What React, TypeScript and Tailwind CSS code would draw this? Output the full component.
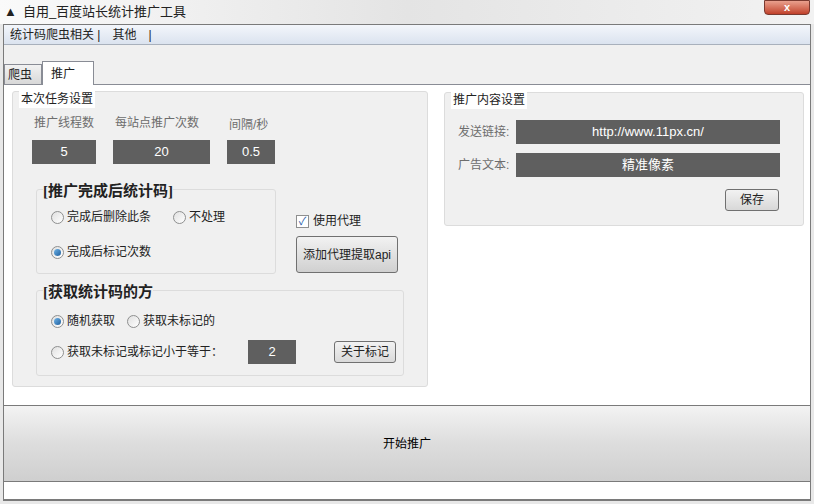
import React from "react";

const F = { fontFamily: '"Liberation Sans","Noto Sans CJK SC",sans-serif' };
const S = { fontFamily: '"Liberation Serif","Noto Sans CJK SC",serif' };

function Radio({ on }: { on?: boolean }) {
  return (
    <span className="inline-flex w-[13px] h-[13px] rounded-full border border-[#8e8f8f] bg-gradient-to-br from-[#e0e0e0] to-white items-center justify-center mr-[3px]">
      {on && <span className="w-[7px] h-[7px] rounded-full bg-gradient-to-br from-[#6fb4e8] to-[#1d5f9e]" />}
    </span>
  );
}

function Box({ v, w }: { v: string; w: string }) {
  return <div className={`${w} h-[24px] bg-[#5f5f5f] text-white flex items-center justify-center text-[13px]`}>{v}</div>;
}

export default function App() {
  return (
    <div className="w-[814px] h-[504px] bg-[#e8e8e8] text-[12px] text-[#222] overflow-hidden flex flex-col" style={F}>
      <div className="h-[24px] flex items-center bg-gradient-to-r from-[#fafafa] via-[#e4e4e4] to-[#f2f2f2] relative">
        <span className="ml-[4px] mr-[6px] text-[13px]">▲</span>
        <span className="text-[13px]">自用_百度站长统计推广工具</span>
        <div className="absolute right-[4px] top-0 w-[46px] h-[15px] rounded-b-[4px] bg-gradient-to-b from-[#e9a08e] to-[#c0402a] border border-[#7a3a30] text-white text-[11px] font-bold flex items-center justify-center">x</div>
      </div>
      <div className="mx-[3px] flex-1 flex flex-col border border-[#7a7a7a] bg-white">
        <div className="h-[20px] flex items-center bg-gradient-to-b from-[#f3f6fb] to-[#dbe3ef] border-b border-[#a8b0bc] px-[6px] gap-[4px] text-[12px]">
          <span>统计码爬虫相关 |</span><span className="ml-[8px]">其他</span><span className="ml-[8px]">|</span>
        </div>
        <div className="h-[40px] bg-[#f0f0f0] flex items-end border-b border-[#898c95]">
          <div className="h-[20px] w-[38px] border border-[#898c95] border-b-0 bg-gradient-to-b from-[#f2f2f2] to-[#d8d8d8] flex items-center pl-[3px] mb-0">爬虫</div>
          <div className="h-[24px] w-[52px] border border-[#898c95] border-b-0 bg-white pl-[8px] pt-[3px] -mb-px">推广</div>
        </div>
        <div className="h-[320px] bg-white flex items-start">
          <div className="ml-[8px] mt-[6px] w-[416px] h-[296px] bg-[#f0f0f0] border border-[#dcdcdc] rounded-[3px] relative">
            <div className="absolute left-[6px] -top-[2px] bg-white px-[2px]">本次任务设置</div>
            <div className="flex gap-[17px] pl-[19px] pt-[22px] text-[#6d6d6d]">
              <div className="w-[64px] flex flex-col gap-[8px]"><span className="pl-[2px]">推广线程数</span><Box v="5" w="w-[64px]" /></div>
              <div className="w-[97px] flex flex-col gap-[8px]"><span className="pl-[2px]">每站点推广次数</span><Box v="20" w="w-[97px]" /></div>
              <div className="w-[48px] flex flex-col gap-[8px]"><span className="pl-[2px] mt-[2px] -mb-[2px]">间隔/秒</span><Box v="0.5" w="w-[48px]" /></div>
            </div>
            <div className="flex mt-[25px] ml-[23px]">
              <div className="w-[240px] h-[85px] border border-[#dcdcdc] rounded-[3px] relative">
                <div className="absolute left-[6px] -top-[10px] text-[15px] font-bold bg-[#f0f0f0]" style={S}>[推广完成后统计码]</div>
                <div className="flex items-center mt-[18px] ml-[14px]"><Radio />完成后删除此条<span className="w-[22px]" /><Radio />不处理</div>
                <div className="flex items-center mt-[17px] ml-[14px]"><Radio on />完成后标记次数</div>
              </div>
              <div className="ml-[20px] mt-[23px]">
                <div className="flex items-center gap-[4px]"><span className="w-[13px] h-[13px] border border-[#8e8f8f] bg-white text-[#2a5caa] text-[11px] leading-[11px] flex items-center justify-center">✓</span>使用代理</div>
                <div className="mt-[6px] w-[102px] h-[37px] border border-[#707070] rounded-[3px] bg-gradient-to-b from-[#f2f2f2] to-[#d0d0d0] flex items-center justify-center">添加代理提取api</div>
              </div>
            </div>
            <div className="ml-[23px] mt-[16px] w-[368px] h-[86px] border border-[#dcdcdc] rounded-[3px] relative">
              <div className="absolute left-[6px] -top-[10px] text-[15px] font-bold bg-[#f0f0f0]" style={S}>[获取统计码的方</div>
              <div className="flex items-center mt-[21px] ml-[14px]"><Radio on />随机获取<span className="w-[12px]" /><Radio />获取未标记的</div>
              <div className="flex items-center mt-[10px] ml-[14px]"><Radio />获取未标记或标记小于等于：<span className="ml-[25px]" /><Box v="2" w="w-[48px]" /><div className="ml-[38px] w-[62px] h-[22px] border border-[#707070] rounded-[3px] bg-gradient-to-b from-[#f2f2f2] to-[#dadada] flex items-center justify-center">关于标记</div></div>
            </div>
          </div>
          <div className="ml-[16px] mt-[7px] w-[360px] h-[134px] bg-[#f0f0f0] border border-[#dcdcdc] rounded-[3px] relative">
            <div className="absolute left-[6px] -top-[2px] bg-white px-[2px]">推广内容设置</div>
            <div className="flex items-center mt-[27px] ml-[13px] text-[#6d6d6d]"><span className="w-[58px]">发送链接:</span><Box v="http://www.11px.cn/" w="w-[264px]" /></div>
            <div className="flex items-center mt-[9px] ml-[13px] text-[#6d6d6d]"><span className="w-[58px]">广告文本:</span><Box v="精准像素" w="w-[264px]" /></div>
            <div className="flex justify-end mr-[24px] mt-[12px]"><div className="w-[54px] h-[22px] border border-[#707070] rounded-[3px] bg-gradient-to-b from-[#f2f2f2] to-[#d8d8d8] flex items-center justify-center">保存</div></div>
          </div>
        </div>
        <div className="h-[77px] border-t border-b border-[#7a7a7a] bg-gradient-to-b from-[#f3f3f3] via-[#dddddd] to-[#cfcfcf] flex items-center justify-center text-[12px] text-black">开始推广</div>
        <div className="flex-1 bg-white border-b border-[#7a7a7a]" />
      </div>
      <div className="h-[3px]" />
    </div>
  );
}
